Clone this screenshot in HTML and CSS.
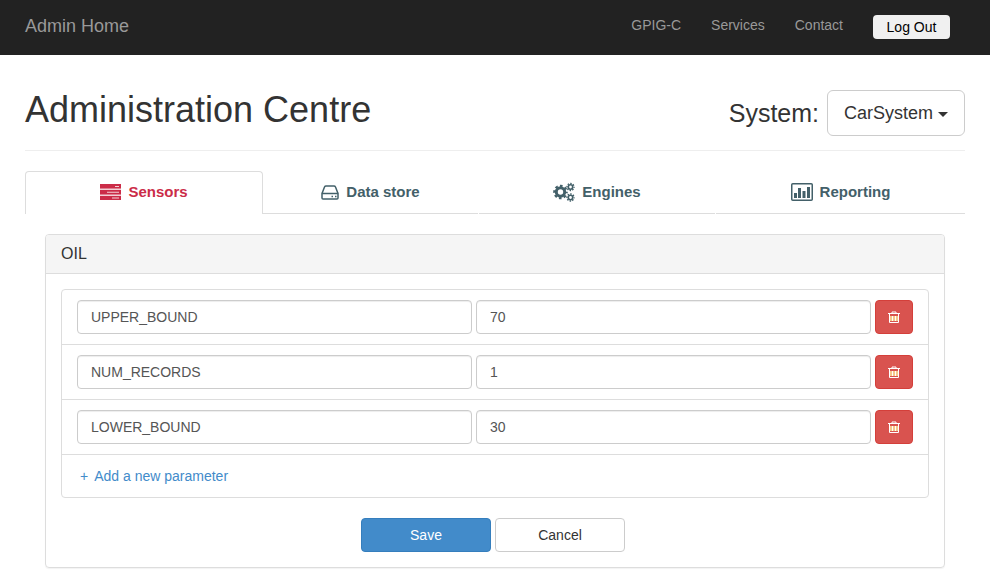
FILE: index.html
```html
<!DOCTYPE html>
<html lang="en">
<head>
<meta charset="utf-8">
<meta name="viewport" content="width=device-width, initial-scale=1">
<title>Administration Centre</title>
<link rel="stylesheet" href="styles.css">
</head>
<body>
<svg class="sprite" aria-hidden="true">
  <symbol id="trash" viewBox="0 0 12 13">
    <path class="trash-fill" d="M2 5h8v5H2z"/>
    <path d="M4 2V1h4v1M0 2.500h12M1.500 3v8.500h9V3M4.500 5v5M7.500 5v5" fill="none" stroke="#fff" stroke-width="1"/>
  </symbol>
</svg>
<header class="navbar">
  <a class="brand" href="#">Admin Home</a>
  <nav class="nav-links">
    <a href="#">GPIG-C</a>
    <a href="#">Services</a>
    <a href="#">Contact</a>
    <button class="logout" type="button">Log Out</button>
  </nav>
</header>
<main class="container">
  <div class="page-header">
    <h1>Administration Centre</h1>
    <div class="system">
      <label for="system">System:</label>
      <div class="picker">
        <select id="system"><option>CarSystem</option></select>
        <svg class="caret" viewBox="0 0 10 5" width="10" height="5" aria-hidden="true"><path d="M0 0h10L5 5z"/></svg>
      </div>
    </div>
  </div>
  <nav class="tabs">
    <a class="tab active" href="#">
      <svg viewBox="0 0 21 16" width="21" height="16" aria-hidden="true"><path class="tasks-back" d="M0 0h21v16H0z"/><path fill="currentColor" fill-rule="evenodd" d="M0 0h21v4.500H0zM15 2v1h4V2zM0 6h21v4.500H0zM7 7.700v1.100h12V7.700zM0 12h21v4H0zM12 13.500v1h7v-1z"/></svg>
      Sensors</a>
    <a class="tab" href="#">
      <svg viewBox="0 0 18 15" width="18" height="15" fill="none" stroke="currentColor" stroke-width="1.500" aria-hidden="true"><path d="M1 8.500v4.500q0 1 1 1h14q1 0 1-1V8.500zM1 8.500l2.500-6.500q.5-1 1.500-1h8q1 0 1.500 1l2.500 6.500"/><path d="M10.500 11.500h1.500M14 11.500h1.500"/></svg>
      Data store</a>
    <a class="tab" href="#">
      <svg viewBox="0 0 22 20" width="22" height="20" fill="none" stroke="currentColor" aria-hidden="true">
        <circle cx="7.500" cy="10" r="4.200" stroke-width="3"/><circle cx="7.500" cy="10" r="6.200" stroke-width="2.200" stroke-dasharray="2.600 2.270" stroke-dashoffset="1.300"/>
        <circle cx="17.500" cy="5" r="2.200" stroke-width="1.600"/><circle cx="17.500" cy="5" r="3.500" stroke-width="1.400" stroke-dasharray="1.500 1.250" stroke-dashoffset=".7"/>
        <circle cx="17.500" cy="15.500" r="2.200" stroke-width="1.600"/><circle cx="17.500" cy="15.500" r="3.500" stroke-width="1.400" stroke-dasharray="1.500 1.250" stroke-dashoffset=".7"/>
      </svg>
      Engines</a>
    <a class="tab" href="#">
      <svg viewBox="0 0 22 18" width="22" height="18" aria-hidden="true"><rect x=".75" y=".75" width="20.500" height="16.500" rx="1" fill="none" stroke="currentColor" stroke-width="1.500"/><path fill="currentColor" d="M3 10h3v5H3zM7 5h3v10H7zM11.500 8h3v7h-3zM16 4h3v11h-3z"/></svg>
      Reporting</a>
  </nav>
  <section class="panel">
    <h2>OIL</h2>
    <form class="panel-body">
      <ul class="params">
        <li>
          <input type="text" aria-label="Parameter name" value="UPPER_BOUND">
          <input type="text" aria-label="Parameter value" value="70">
          <button class="delete" type="button" aria-label="Delete"><svg width="12" height="13"><use href="#trash"/></svg></button>
        </li>
        <li>
          <input type="text" aria-label="Parameter name" value="NUM_RECORDS">
          <input type="text" aria-label="Parameter value" value="1">
          <button class="delete" type="button" aria-label="Delete"><svg width="12" height="13"><use href="#trash"/></svg></button>
        </li>
        <li>
          <input type="text" aria-label="Parameter name" value="LOWER_BOUND">
          <input type="text" aria-label="Parameter value" value="30">
          <button class="delete" type="button" aria-label="Delete"><svg width="12" height="13"><use href="#trash"/></svg></button>
        </li>
        <li class="add"><a href="#"><span>+</span>Add a new parameter</a></li>
      </ul>
      <div class="actions">
        <button class="btn primary" type="button">Save</button>
        <button class="btn" type="button">Cancel</button>
      </div>
    </form>
  </section>
</main>
</body>
</html>
```
FILE: styles.css
```css
* { box-sizing: border-box; }

body {
  margin: 0;
  font: 14px/20px "Liberation Sans", Arial, sans-serif;
  color: #333;
  background: #fff;
}

a { color: #428bca; text-decoration: none; }
button, input, select { font: inherit; color: inherit; margin: 0; }
button { cursor: pointer; }
svg { flex: none; }
.sprite { display: none; }
.trash-fill { fill: #f5c98a; }
.tasks-back { fill: #f3d0d6; }

.navbar {
  display: flex;
  justify-content: space-between;
  align-items: flex-start;
  padding: 15px 40px 15px 25px;
  min-height: 55px;
  background: #222;
}
.navbar a { color: #999; }
.navbar .brand { font-size: 18px; line-height: 22px; }
.nav-links { display: flex; align-items: flex-start; gap: 30px; }
.logout {
  width: 77px;
  padding: 2px 0;
  border: 0;
  border-radius: 4px;
  background: #f0f0f0;
  color: #000;
}

.container { padding: 35px 25px 12px; }
.page-header {
  display: flex;
  justify-content: space-between;
  padding-bottom: 14px;
  margin-bottom: 20px;
  border-bottom: 1px solid #eee;
}
h1 { margin: 0; font-size: 36px; font-weight: 400; line-height: 40px; }
.system { display: flex; align-items: center; gap: 8px; font-size: 25px; line-height: 28px; }
.picker { position: relative; }
.picker select {
  appearance: none;
  display: block;
  width: 138px;
  height: 46px;
  padding: 0 30px 0 16px;
  border: 1px solid #ccc;
  border-radius: 6px;
  background: #fff;
  font-size: 18px;
}
.caret { position: absolute; right: 17px; top: 22px; fill: #333; pointer-events: none; }

.tabs { display: grid; grid-template-columns: 238fr 216fr 237fr 249fr; }
.tab {
  display: flex;
  align-items: center;
  justify-content: center;
  gap: 7px;
  height: 43px;
  margin-right: 1px;
  border-bottom: 1px solid #ddd;
  font-size: 15px;
  font-weight: 700;
  color: #436069;
}
.tab:last-child { margin-right: 0; }
.tab.active {
  margin-right: 0;
  border: 1px solid #ddd;
  border-bottom: 0;
  padding-bottom: 2px;
  border-radius: 4px 4px 0 0;
  color: #cb2c48;
}

.panel {
  margin: 20px 20px 0;
  border: 1px solid #ddd;
  border-radius: 4px;
  box-shadow: 0 1px 1px rgba(0, 0, 0, .05);
}
h2 {
  margin: 0;
  padding: 10px 15px;
  border-bottom: 1px solid #ddd;
  border-radius: 3px 3px 0 0;
  background: #f5f5f5;
  font-size: 16px;
  font-weight: 400;
  line-height: 18px;
}
.panel-body { padding: 15px; }

.params {
  margin: 0 0 20px;
  padding: 0;
  list-style: none;
  border: 1px solid #ddd;
  border-radius: 4px;
}
.params li { display: flex; gap: 4px; padding: 10px 15px; }
.params li + li { border-top: 1px solid #ddd; }
.params input {
  flex: 1;
  min-width: 0;
  height: 34px;
  padding: 6px 13px;
  border: 1px solid #ccc;
  border-radius: 4px;
  box-shadow: inset 0 1px 1px rgba(0, 0, 0, .075);
  color: #555;
}
.delete {
  display: flex;
  align-items: center;
  justify-content: center;
  width: 38px;
  height: 34px;
  padding: 0;
  border: 1px solid #d43f3a;
  border-radius: 4px;
  background: #d9534f;
}
.params .add { padding: 11px 18px; }
.add a { display: flex; gap: 6px; }

.actions { display: flex; justify-content: center; gap: 4px; padding-right: 4px; }
.btn {
  width: 130px;
  height: 34px;
  padding: 0;
  border: 1px solid #ccc;
  border-radius: 4px;
  background: #fff;
}
.btn.primary { border-color: #357ebd; background: #428bca; color: #fff; }
```
